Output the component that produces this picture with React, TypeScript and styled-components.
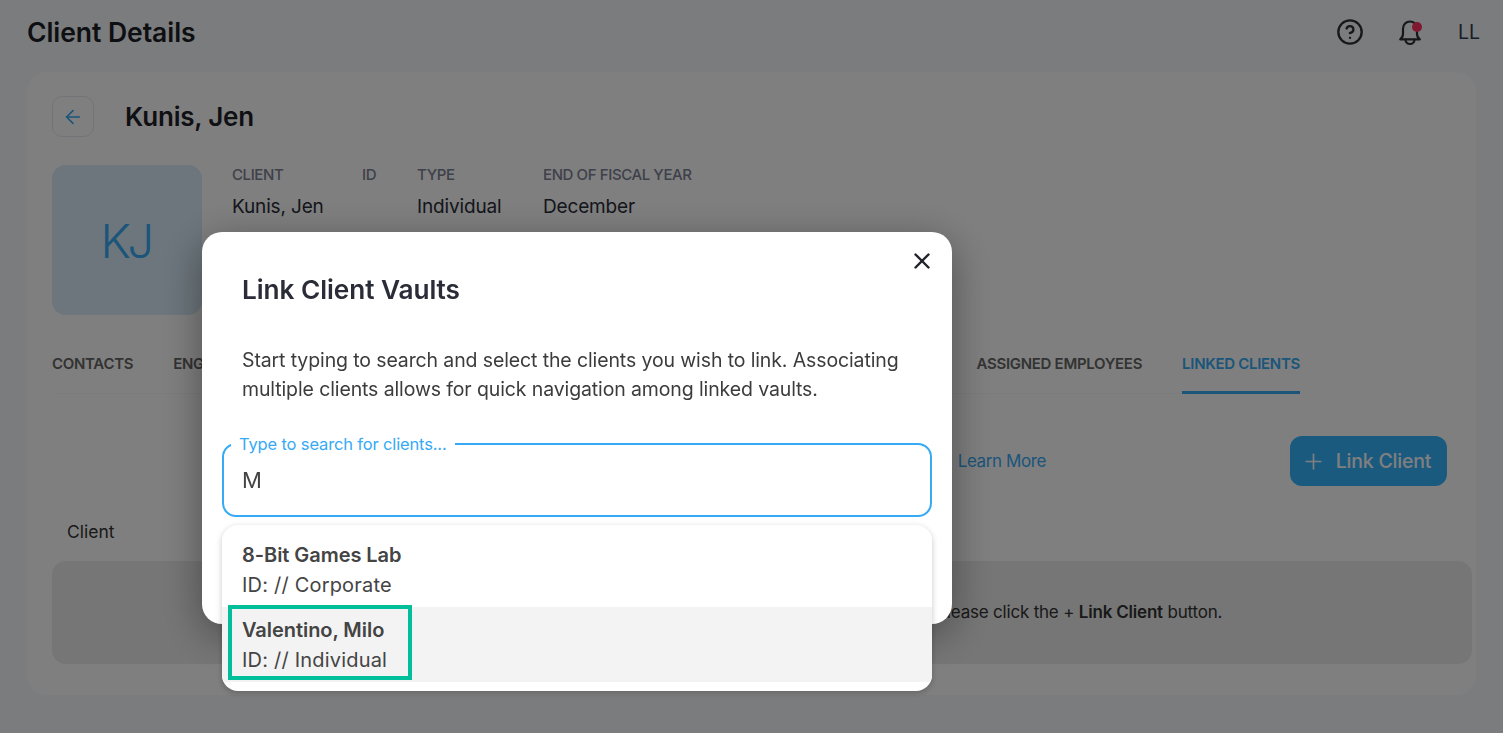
import React from 'react'
import styled, { createGlobalStyle } from 'styled-components'
import { ArrowLeft, CircleHelp, Plus, X } from 'lucide-react'

const GlobalStyle = createGlobalStyle`
  html, body {
    margin: 0;
    padding: 0;
    height: 100%;
    overflow: hidden;
    background: #f7f8fc;
    font-family: "Inter", "Liberation Sans", sans-serif;
  }
  * { box-sizing: border-box; }
`

const Page = styled.div`
  width: 1503px;
  height: 733px;
  display: flex;
  flex-direction: column;
  overflow: hidden;
`

const Header = styled.header`
  height: 72px;
  flex-shrink: 0;
  display: flex;
  align-items: center;
  justify-content: space-between;
  padding: 0 23px 8px 27px;
`

const PageTitle = styled.h1`
  margin: 0;
  font-size: 26.5px;
  font-weight: 600;
  letter-spacing: -0.05px;
  color: #1b1e26;
`

const HeaderActions = styled.div`
  display: flex;
  align-items: center;
  gap: 32px;
  color: #2d3038;
`

const BellWrap = styled.div`
  position: relative;
  display: flex;
`

const BellDot = styled.span`
  position: absolute;
  top: 4px;
  right: 2px;
  width: 10px;
  height: 10px;
  border-radius: 50%;
  background: #ff3060;
`

const Initials = styled.span`
  font-size: 19.5px;
  color: #333a4a;
  margin-left: 1.5px;
`

const Card = styled.main`
  width: 1449px;
  height: 623px;
  margin-left: 27px;
  padding: 24px 4px 0 25px;
  background: #fff;
  border-radius: 20px;
`

const TitleRow = styled.div`
  display: flex;
  align-items: center;
  gap: 31px;
`

const BackButton = styled.button`
  width: 42px;
  height: 41px;
  display: flex;
  align-items: center;
  justify-content: center;
  padding: 0;
  background: #fff;
  border: 1px solid #e6e8ee;
  border-radius: 10px;
  color: #36aaf5;
`

const ClientName = styled.h2`
  margin: 0;
  font-size: 26px;
  font-weight: 600;
  letter-spacing: -0.2px;
  color: #1f2128;
`

const Summary = styled.section`
  display: flex;
  gap: 30px;
  margin-top: 28px;
`

const Avatar = styled.div`
  width: 150px;
  height: 150px;
  display: flex;
  align-items: center;
  justify-content: center;
  padding-right: 3px;
  border-radius: 14px;
  background: #d9ecf9;
  color: #36aaf5;
  font-size: 47px;
  font-weight: 300;
  letter-spacing: -3.5px;
`

const MetaRow = styled.div`
  display: flex;
  align-items: flex-start;
  padding-top: 1px;
`

const MetaColumn = styled.div<{ $width: number }>`
  width: ${p => p.$width}px;
`

const MetaLabel = styled.div`
  height: 18px;
  font-size: 15px;
  line-height: 18px;
  font-weight: 500;
  letter-spacing: -0.4px;
  color: #7d8194;
`

const MetaValue = styled.div`
  margin-top: 11px;
  font-size: 19px;
  line-height: 24px;
  letter-spacing: -0.15px;
  color: #2a2d38;
`

const Tabs = styled.nav`
  width: 1248px;
  height: 54px;
  margin-top: 25px;
  display: flex;
  gap: 40px;
  border-bottom: 1px solid #f8f8fa;
`

const Tab = styled.a<{ $active?: boolean; $push?: boolean }>`
  height: 54px;
  padding-top: 14px;
  font-size: 15px;
  line-height: 20px;
  font-weight: 600;
  letter-spacing: -0.3px;
  white-space: nowrap;
  color: ${p => (p.$active ? '#36aaf5' : '#666')};
  border-bottom: 3px solid ${p => (p.$active ? '#36aaf5' : 'transparent')};
  margin-left: ${p => (p.$push ? 'auto' : '0')};
`

const Toolbar = styled.div`
  height: 50px;
  margin-top: 42px;
  padding-right: 25px;
  display: flex;
  align-items: center;
  justify-content: flex-end;
`

const LearnMore = styled.a`
  margin-right: 244px;
  font-size: 17px;
  letter-spacing: -0.4px;
  color: #36aaf5;
`

const PrimaryButton = styled.button`
  width: 157px;
  height: 50px;
  display: flex;
  align-items: center;
  justify-content: center;
  gap: 10px;
  padding: 0 5px 0 0;
  border: 0;
  border-radius: 12px;
  background: #36b4ff;
  color: #fff;
  font-family: inherit;
  font-size: 19.5px;
  font-weight: 500;
  letter-spacing: -0.2px;
`

const ColumnHeader = styled.div`
  margin-top: 34px;
  padding-left: 15px;
  font-size: 17.5px;
  line-height: 24px;
  color: #333;
`

const EmptyPanel = styled.div`
  width: 1420px;
  height: 103px;
  margin-top: 17px;
  padding-bottom: 2px;
  display: flex;
  align-items: center;
  justify-content: center;
  border-radius: 14px;
  background: #ececec;
  font-size: 17px;
  letter-spacing: -0.2px;
  color: #333;

  b { font-weight: 600; }
`

const Overlay = styled.div`
  position: fixed;
  inset: 0;
  padding: 232px 0 0 202px;
  background: rgba(0, 0, 0, 0.5);
`

const Modal = styled.div`
  position: relative;
  width: 750px;
  height: 392px;
  padding: 0 20px;
  background: #fff;
  border-radius: 20px;
  box-shadow: 0 10px 40px rgba(0, 0, 0, 0.38);
`

const CloseButton = styled.button`
  position: absolute;
  top: 16px;
  right: 17px;
  display: flex;
  padding: 0;
  border: 0;
  background: none;
  color: #20232b;
`

const ModalTitle = styled.h3`
  margin: 0;
  padding: 41px 20px 0;
  font-size: 26.2px;
  line-height: 34px;
  font-weight: 600;
  letter-spacing: -0.05px;
  color: #2a2d38;
`

const ModalText = styled.p`
  margin: 0;
  padding: 39px 20px 0;
  font-size: 19.5px;
  line-height: 29px;
  letter-spacing: -0.12px;
  color: #3c3c3c;
`

const Field = styled.div`
  position: relative;
  height: 74px;
  margin-top: 39px;
  padding: 20px 18px 0;
  border: 2px solid #36aaf5;
  border-radius: 14px;
  font-size: 22px;
  line-height: 30px;
  color: #444;
`

const FieldLabel = styled.label`
  position: absolute;
  top: -11px;
  left: 7px;
  padding: 0 8px;
  background: #fff;
  font-size: 16.5px;
  line-height: 20px;
  letter-spacing: -0.15px;
  color: #36aaf5;
`

const Dropdown = styled.div`
  position: absolute;
  top: 293px;
  left: 20px;
  width: 710px;
  height: 166px;
  padding: 7px 0 9px;
  background: #fff;
  border-radius: 16px;
  box-shadow: 0 2px 6px rgba(0, 0, 0, 0.22);
  overflow: hidden;
`

const Option = styled.div<{ $highlighted?: boolean }>`
  height: 75px;
  padding: 8px 20px 0;
  background: ${p => (p.$highlighted ? '#f3f3f3' : '#fff')};
  color: #444;
`

const OptionName = styled.div`
  font-size: 20px;
  line-height: 30px;
  font-weight: 600;
  letter-spacing: -0.05px;
`

const OptionMeta = styled.div`
  font-size: 20px;
  line-height: 30px;
  letter-spacing: 0.2px;
`

const Callout = styled.div`
  position: absolute;
  top: 373px;
  left: 26px;
  width: 184px;
  height: 75px;
  border: 4px solid #00bf9a;
`

const BellIcon = () => (
  <svg width="28" height="28" viewBox="0 0 28 28" fill="none" stroke="currentColor" strokeWidth="2.2" strokeLinecap="round" strokeLinejoin="round">
    <path d="M4.2 21.3c1.6-1.2 2.8-3 2.8-5.3v-5.5a7 7 0 0 1 14 0V16c0 2.3 1.2 4.1 2.8 5.3Z" />
    <path d="M9.5 21.5a4.5 4.5 0 0 0 9 0" />
  </svg>
)

const App: React.FC = () => {
  return (
    <>
      <GlobalStyle />
      <Page>
        <Header>
          <PageTitle>Client Details</PageTitle>
          <HeaderActions>
            <CircleHelp size={28} strokeWidth={2} />
            <BellWrap>
              <BellIcon />
              <BellDot />
            </BellWrap>
            <Initials>LL</Initials>
          </HeaderActions>
        </Header>
        <Card>
          <TitleRow>
            <BackButton>
              <ArrowLeft size={22} strokeWidth={1.75} />
            </BackButton>
            <ClientName>Kunis, Jen</ClientName>
          </TitleRow>
          <Summary>
            <Avatar>KJ</Avatar>
            <MetaRow>
              <MetaColumn $width={130}>
                <MetaLabel>CLIENT</MetaLabel>
                <MetaValue>Kunis, Jen</MetaValue>
              </MetaColumn>
              <MetaColumn $width={55}>
                <MetaLabel>ID</MetaLabel>
              </MetaColumn>
              <MetaColumn $width={126}>
                <MetaLabel>TYPE</MetaLabel>
                <MetaValue>Individual</MetaValue>
              </MetaColumn>
              <MetaColumn $width={200}>
                <MetaLabel>END OF FISCAL YEAR</MetaLabel>
                <MetaValue>December</MetaValue>
              </MetaColumn>
            </MetaRow>
          </Summary>
          <Tabs>
            <Tab>CONTACTS</Tab>
            <Tab>ENGAGEMENTS</Tab>
            <Tab $push>ASSIGNED EMPLOYEES</Tab>
            <Tab $active>LINKED CLIENTS</Tab>
          </Tabs>
          <Toolbar>
            <LearnMore>Learn More</LearnMore>
            <PrimaryButton>
              <Plus size={25} strokeWidth={1.6} />
              Link Client
            </PrimaryButton>
          </Toolbar>
          <ColumnHeader>Client</ColumnHeader>
          <EmptyPanel>
            <span>
              There are currently no clients linked to this vault. To link a client vault to this one, please click the + <b>Link Client</b> button.
            </span>
          </EmptyPanel>
        </Card>
      </Page>
      <Overlay>
        <Modal>
          <CloseButton>
            <X size={26} strokeWidth={2.25} />
          </CloseButton>
          <ModalTitle>Link Client Vaults</ModalTitle>
          <ModalText>
            Start typing to search and select the clients you wish to link. Associating multiple clients allows for quick
            navigation among linked vaults.
          </ModalText>
          <Field>
            <FieldLabel>Type to search for clients...</FieldLabel>
            M
          </Field>
          <Dropdown>
            <Option>
              <OptionName>8-Bit Games Lab</OptionName>
              <OptionMeta>ID: // Corporate</OptionMeta>
            </Option>
            <Option $highlighted>
              <OptionName>Valentino, Milo</OptionName>
              <OptionMeta>ID: // Individual</OptionMeta>
            </Option>
          </Dropdown>
          <Callout />
        </Modal>
      </Overlay>
    </>
  )
}

export default App
